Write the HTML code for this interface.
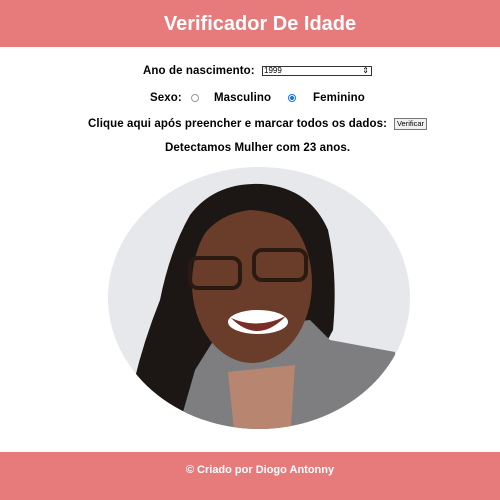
<!DOCTYPE html>
<html><head><meta charset="utf-8"><style>
*{margin:0;padding:0;box-sizing:border-box}
body{width:500px;height:500px;background:#fff;font-family:"Liberation Sans",Arial,sans-serif;position:relative;overflow:hidden}
.hdr{position:absolute;left:0;top:0;width:500px;height:47px;background:#e77b7c;color:#fff;font-weight:bold;font-size:20px;text-align:center;line-height:48px;padding-left:20px}
.ftr{position:absolute;left:0;top:452px;width:500px;height:48px;background:#e77b7c;color:#fff;font-weight:bold;font-size:11px;text-align:center;padding-top:12px;padding-left:20px}
.t{position:absolute;font-size:11.5px;font-weight:bold;color:#000;white-space:nowrap;letter-spacing:0.1px}
.sel{position:absolute;left:262px;top:66px;width:110px;height:10px;border:1px solid #333;font-size:8px;line-height:8px;font-weight:normal;padding-left:1px}
.radio{position:absolute;width:8px;height:8px;border-radius:50%;border:1px solid #999}
.btn{position:absolute;left:394px;top:118px;width:33px;height:12px;border:1px solid #777;background:#f0f0f0;font-size:7.5px;line-height:10px;text-align:center;font-weight:normal}
</style></head><body>
<div class="hdr">Verificador De Idade</div>
<div class="t" style="left:143px;top:65px">Ano de nascimento:</div>
<div class="sel">1999<span style="position:absolute;right:2px;top:0">⇕</span></div>
<div class="t" style="left:150px;top:92px">Sexo:</div>
<div class="radio" style="left:191px;top:94px"></div>
<div class="t" style="left:214px;top:92px">Masculino</div>
<div class="radio" style="left:288px;top:94px;border-color:#1a73e8;background:radial-gradient(circle,#1a73e8 45%,#fff 50%)"></div>
<div class="t" style="left:313px;top:92px">Feminino</div>
<div class="t" style="left:88px;top:118px">Clique aqui após preencher e marcar todos os dados:</div>
<div class="btn">Verificar</div>
<div class="t" style="left:165px;top:142px">Detectamos Mulher com 23 anos.</div>
<svg style="position:absolute;left:0;top:0" width="500" height="500">
<defs><clipPath id="c"><ellipse cx="259" cy="298" rx="151" ry="131"/></clipPath></defs>
<ellipse cx="259" cy="298" rx="151" ry="131" fill="#e7e8eb"/>
<g clip-path="url(#c)">
<path d="M190 215 Q215 182 262 184 Q310 188 328 230 Q338 275 333 330 L325 345 L300 330 L210 360 L205 420 L150 410 L130 400 Q140 350 160 300 Q170 250 190 215 Z" fill="#1c1714"/>
<path d="M220 330 L310 320 L330 340 L395 352 L400 440 L175 440 L195 370 Z" fill="#7e7e80"/>
<path d="M228 372 L295 365 L290 440 L235 440 Z" fill="#b88570"/>
<ellipse cx="252" cy="283" rx="60" ry="80" fill="#6a3d2a"/>
<path d="M195 250 Q210 215 250 210 Q290 212 310 240 Q300 200 260 198 Q210 200 195 250Z" fill="#1c1714"/>
<ellipse cx="258" cy="322" rx="30" ry="12" fill="#fff"/>
<path d="M231 318 Q258 345 286 316 Q258 330 231 318Z" fill="#7a2e27"/>
<rect x="190" y="258" width="50" height="30" rx="8" fill="none" stroke="#2a1a12" stroke-width="4"/>
<rect x="254" y="250" width="52" height="30" rx="8" fill="none" stroke="#2a1a12" stroke-width="4"/>
</g>
</svg>
<div class="ftr">© Criado por Diogo Antonny</div>
</body></html>
